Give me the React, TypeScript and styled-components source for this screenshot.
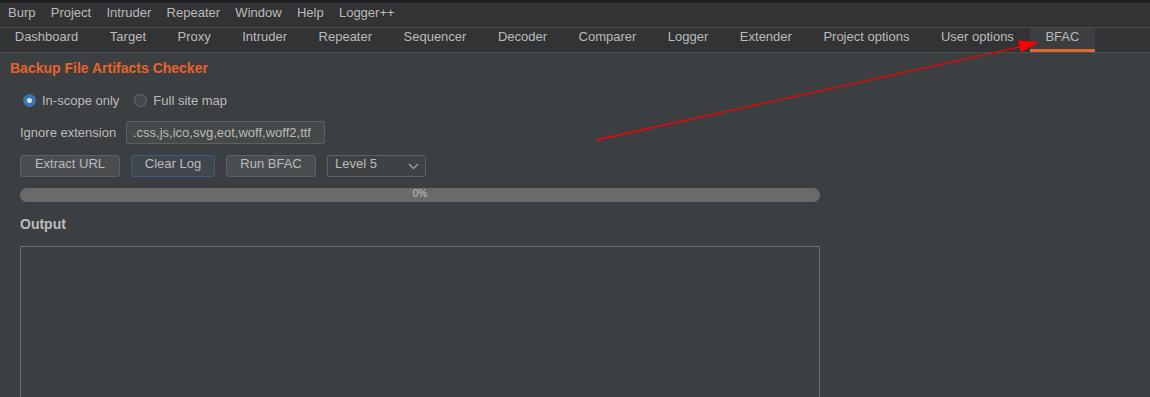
import styled, { createGlobalStyle } from "styled-components";

const GlobalStyle = createGlobalStyle`
  html, body {
    margin: 0;
    padding: 0;
    background: #3c3f41;
    overflow: hidden;
  }
  body {
    font-family: "Liberation Sans", Arial, sans-serif;
    font-size: 13px;
    color: #bbbbbb;
  }
`;

const menus = ["Burp", "Project", "Intruder", "Repeater", "Window", "Help", "Logger++"];
const tabs = [
  "Dashboard",
  "Target",
  "Proxy",
  "Intruder",
  "Repeater",
  "Sequencer",
  "Decoder",
  "Comparer",
  "Logger",
  "Extender",
  "Project options",
  "User options",
  "BFAC",
];

const App = () => {
  return (
    <Page>
      <GlobalStyle />
      <TopStrip />
      <MenuBar>
        {menus.map((m) => (
          <MenuItem key={m}>{m}</MenuItem>
        ))}
      </MenuBar>
      <TabBar>
        {tabs.map((t) => (
          <Tab key={t} $active={t === "BFAC"}>
            {t}
          </Tab>
        ))}
      </TabBar>
      <Panel>
        <Title>Backup File Artifacts Checker</Title>
        <RadioRow>
          <RadioOption>
            <Radio $checked />
            <span>In-scope only</span>
          </RadioOption>
          <RadioOption>
            <Radio />
            <span>Full site map</span>
          </RadioOption>
        </RadioRow>
        <FieldRow>
          <FieldLabel>Ignore extension</FieldLabel>
          <TextField>.css,js,ico,svg,eot,woff,woff2,ttf</TextField>
        </FieldRow>
        <ButtonRow>
          <Button $width={100}>Extract URL</Button>
          <Button $width={84} $focused>
            Clear Log
          </Button>
          <Button $width={90}>Run BFAC</Button>
          <Select>
            <span>Level 5</span>
            <svg width="11" height="7" viewBox="0 0 11 7">
              <path d="M1 1 L5.5 5.5 L10 1" fill="none" stroke="#a9abad" strokeWidth="1.1" />
            </svg>
          </Select>
        </ButtonRow>
        <Progress>0%</Progress>
        <SectionLabel>Output</SectionLabel>
        <OutputBox />
      </Panel>
      <Arrow width="1150" height="397" viewBox="0 0 1150 397">
        <line x1="596" y1="140" x2="1022" y2="46.5" stroke="#ff0000" strokeWidth="1.3" />
        <polygon points="1039,42 1018,40.5 1021,52.2" fill="#ff0000" />
      </Arrow>
    </Page>
  );
};

const Page = styled.div`
  position: relative;
  width: 1150px;
  height: 397px;
  display: flex;
  flex-direction: column;
  overflow: hidden;
`;

const TopStrip = styled.div`
  height: 3px;
  background: #1f2023;
`;

const MenuBar = styled.div`
  height: 25px;
  box-sizing: border-box;
  padding-bottom: 5px;
  display: flex;
  align-items: center;
  background: #313335;
  border-bottom: 1px solid #4a4d50;
`;

const MenuItem = styled.span`
  padding: 0 7.7px 0 7.6px;
  color: #bbbbbb;

  &:first-child {
    padding-left: 8px;
  }
`;

const TabBar = styled.div`
  height: 25px;
  box-sizing: border-box;
  display: flex;
  align-items: stretch;
  background: #313335;
  border-bottom: 1px solid #4d5053;
  margin-left: -1px;
`;

const Tab = styled.div<{ $active?: boolean }>`
  display: flex;
  align-items: center;
  padding: 0 15.75px 8px;
  box-sizing: border-box;
  color: #bbbbbb;
  background: ${(p) => (p.$active ? "#3c3f41" : "transparent")};
  box-shadow: ${(p) => (p.$active ? "inset 0 -3px 0 #df6a2e" : "none")};
`;

const Panel = styled.div`
  flex: 1;
  display: flex;
  flex-direction: column;
  padding-top: 7px;
  min-height: 0;
`;

const Title = styled.div`
  margin-left: 10px;
  font-size: 14px;
  line-height: 17px;
  font-weight: 700;
  color: #e8622c;
`;

const RadioRow = styled.div`
  display: flex;
  align-items: center;
  height: 16px;
  margin-top: 15px;
  padding-left: 23px;
  gap: 15px;
`;

const RadioOption = styled.label`
  display: flex;
  align-items: center;
  gap: 6px;
`;

const Radio = styled.span<{ $checked?: boolean }>`
  width: 13px;
  height: 13px;
  border-radius: 50%;
  box-sizing: border-box;
  display: flex;
  align-items: center;
  justify-content: center;
  background: ${(p) => (p.$checked ? "#3c75b0" : "#45494a")};
  border: 1px solid ${(p) => (p.$checked ? "#3c75b0" : "#6b6e70")};

  &::after {
    content: "";
    width: 5px;
    height: 5px;
    border-radius: 50%;
    background: ${(p) => (p.$checked ? "#dddddd" : "transparent")};
  }
`;

const FieldRow = styled.div`
  display: flex;
  align-items: center;
  margin-top: 13px;
  padding-left: 20px;
`;

const FieldLabel = styled.span`
  width: 106px;
`;

const TextField = styled.div`
  width: 199px;
  height: 23px;
  box-sizing: border-box;
  display: flex;
  align-items: center;
  padding-left: 6px;
  background: #45494a;
  border: 1px solid #5e6163;
  border-radius: 2px;
`;

const ButtonRow = styled.div`
  display: flex;
  align-items: center;
  gap: 11px;
  margin-top: 11px;
  padding-left: 20px;
`;

const Button = styled.div<{ $width: number; $focused?: boolean }>`
  width: ${(p) => p.$width}px;
  height: 22px;
  box-sizing: border-box;
  display: flex;
  align-items: center;
  justify-content: center;
  padding-bottom: 5px;
  background: ${(p) => (p.$focused ? "#41464c" : "#4b4e50")};
  border: 1px solid ${(p) => (p.$focused ? "#3f5b82" : "#5e6163")};
  border-radius: 3px;
  color: #bbbbbb;
`;

const Select = styled.div`
  width: 99px;
  height: 22px;
  box-sizing: border-box;
  display: flex;
  align-items: center;
  justify-content: space-between;
  padding: 0 6px 5px 7px;
  background: #3e4244;
  border: 1px solid #5e6163;
  border-radius: 2px;

  svg {
    margin-top: 6px;
  }
`;

const Progress = styled.div`
  margin: 11px 0 0 20px;
  width: 800px;
  height: 14px;
  border-radius: 7px;
  background: #6a6a6a;
  display: flex;
  align-items: center;
  justify-content: center;
  font-size: 10px;
  color: #c2c2c2;
  line-height: 14px;
  padding-bottom: 2px;
  box-sizing: border-box;
`;

const SectionLabel = styled.div`
  margin: 14px 0 0 20px;
  font-size: 14px;
  line-height: 17px;
  font-weight: 700;
  color: #bbbbbb;
`;

const OutputBox = styled.div`
  margin: 13px 0 0 20px;
  width: 800px;
  flex: 1;
  box-sizing: border-box;
  border: 1px solid #6b6b6b;
  border-bottom: none;
`;

const Arrow = styled.svg`
  position: absolute;
  top: 0;
  left: 0;
  pointer-events: none;
`;

export default App;
